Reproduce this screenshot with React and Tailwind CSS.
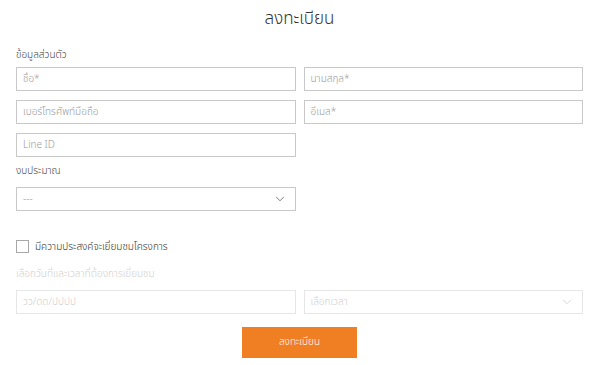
import React from 'react';
import { ChevronDown } from 'lucide-react';

const font = { fontFamily: '"Noto Sans Thai", "Noto Sans", "Liberation Sans", sans-serif' };

function Field({ placeholder, faded }) {
  return (
    <div className={`h-[24px] flex items-center px-[6px] border ${faded ? 'border-[#e6e6e6] text-[#cfcfcf]' : 'border-[#c8c8c8] text-[#9a9a9a]'} text-[10px] font-light bg-white`}>
      {placeholder}
    </div>
  );
}

function Select({ value, faded }) {
  return (
    <div className={`h-[24px] flex items-center justify-between pl-[6px] pr-[8px] border ${faded ? 'border-[#e6e6e6] text-[#cfcfcf]' : 'border-[#c8c8c8] text-[#9a9a9a]'} text-[10px] font-light bg-white`}>
      <span>{value}</span>
      <ChevronDown size={14} strokeWidth={1.3} className={faded ? 'text-[#c8c8c8]' : 'text-[#555]'} />
    </div>
  );
}

export default function App() {
  return (
    <div className="w-[600px] h-[365px] bg-white overflow-hidden font-light" style={font}>
      <div className="pl-[16px] pr-[17px]">
        <h1 className="text-center text-[17px] text-[#333] leading-none pt-[11px] font-light">ลงทะเบียน</h1>

        <p className="text-[10px] text-[#444] mt-[22px] leading-none">ข้อมูลส่วนตัว</p>

        <div className="grid grid-cols-2 gap-x-[8px] gap-y-[9px] mt-[7px]">
          <Field placeholder="ชื่อ*" />
          <Field placeholder="นามสกุล*" />
          <Field placeholder="เบอร์โทรศัพท์มือถือ" />
          <Field placeholder="อีเมล*" />
          <Field placeholder="Line ID" />
        </div>

        <p className="text-[10px] text-[#444] mt-[9px] leading-none">งบประมาณ</p>
        <div className="grid grid-cols-2 gap-x-[8px] mt-[11px]">
          <Select value="---" />
        </div>

        <label className="flex items-center gap-[6px] mt-[29px]">
          <span className="w-[13px] h-[13px] border border-[#a8a8a8] bg-white" />
          <span className="text-[10px] text-[#333] leading-none">มีความประสงค์จะเยี่ยมชมโครงการ</span>
        </label>

        <p className="text-[10px] text-[#d0d0d0] mt-[16px] leading-none">เลือกวันที่และเวลาที่ต้องการเยี่ยมชม</p>
        <div className="grid grid-cols-2 gap-x-[8px] mt-[11px]">
          <Field placeholder="วว/ดด/ปปปป" faded />
          <Select value="เลือกเวลา" faded />
        </div>

        <div className="flex justify-center mt-[13px]">
          <button className="w-[115px] h-[31px] bg-[#f07e22] text-white text-[10px] font-light">ลงทะเบียน</button>
        </div>
      </div>
    </div>
  );
}
